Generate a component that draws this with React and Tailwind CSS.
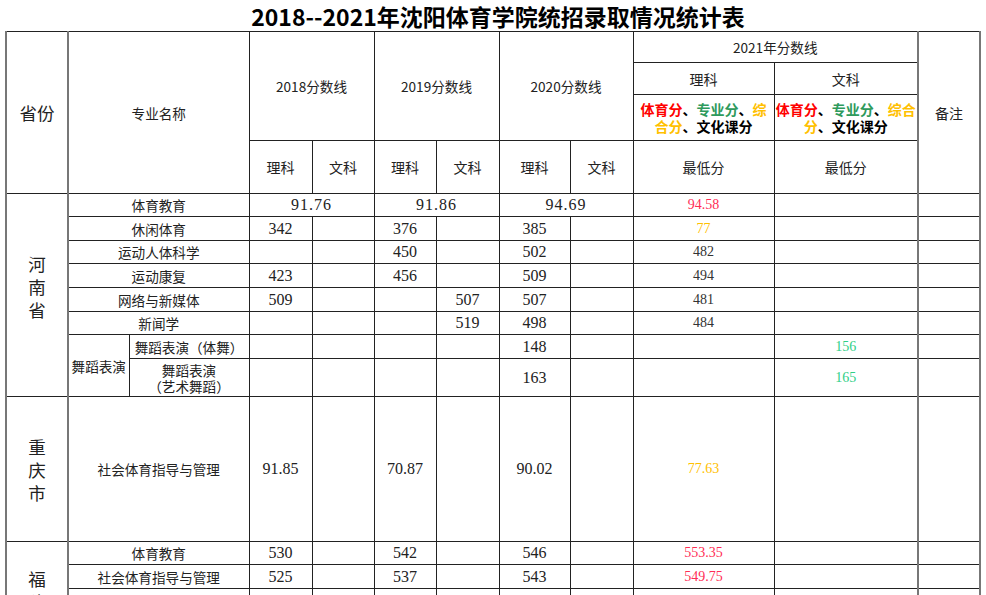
import React from "react";

const RED = "text-[#ff2d55]";
const GOLD = "text-[#ffc000]";
const GREEN = "text-[#2fcf86]";

const td = "border border-[#222] text-center align-middle p-0";
const sideL = "border-l-2 border-l-[#777] border-r-2 border-r-[#777]";
const sideR = "border-l-2 border-l-[#777] border-r-2 border-r-[#777]";
const num = "font-['Liberation_Serif',serif] text-[16px] text-[#222]";
const small = "font-['Liberation_Serif',serif] text-[14px]";

const Nums = ({ vals }) =>
    vals.map((v, i) => (
        <td key={i} className={`${td} ${num}`}>
            {v}
        </td>
    ));

const Low = ({ li, wen }) => (
    <>
        <td className={`${td} ${small} ${li ? li.c : ""}`}>{li ? li.v : ""}</td>
        <td className={`${td} ${small} ${wen ? wen.c : ""}`}>{wen ? wen.v : ""}</td>
        <td className={`${td} ${sideR}`}></td>
    </>
);

const Vertical = ({ chars, className = "" }) => (
    <div className={`flex flex-col items-center leading-[23px] text-[17.5px] ${className}`}>
        {chars.split("").map((c, i) => (
            <span key={i}>{c}</span>
        ))}
    </div>
);

const henan = [
    { name: "休闲体育", v: ["342", "", "376", "", "385", ""], li: { v: "77", c: GOLD }, h: "h-[24px]" },
    { name: "运动人体科学", v: ["", "", "450", "", "502", ""], li: { v: "482", c: "text-[#333]" }, h: "h-[23px]" },
    { name: "运动康复", v: ["423", "", "456", "", "509", ""], li: { v: "494", c: "text-[#333]" }, h: "h-[24px]" },
    { name: "网络与新媒体", v: ["509", "", "", "507", "507", ""], li: { v: "481", c: "text-[#333]" }, h: "h-[24px]" },
    { name: "新闻学", v: ["", "", "", "519", "498", ""], li: { v: "484", c: "text-[#333]" }, h: "h-[23px]" },
];

const cols = [62, 61, 120, 63, 62, 62, 63, 71, 63, 141, 144, 62];

export default function App() {
    return (
        <div className="w-[986px] h-[595px] overflow-hidden bg-white text-[#222] font-['Noto_Sans_CJK_SC',sans-serif]">
            <div className="h-[31px] flex items-center justify-center pl-[10px] pt-[2px] text-[23px] font-bold text-black leading-none">
                2018--2021年沈阳体育学院统招录取情况统计表
            </div>
            <table className="ml-[5px] w-[974px] table-fixed border-collapse text-[13.6px] leading-[18px]">
                <colgroup>
                    {cols.map((w, i) => (
                        <col key={i} style={{ width: w }} />
                    ))}
                </colgroup>
                <tbody>
                    <tr className="h-[31px]">
                        <td rowSpan={4} className={`${td} ${sideL} text-[17.5px]`}>省份</td>
                        <td rowSpan={4} colSpan={2} className={td}>专业名称</td>
                        <td rowSpan={3} colSpan={2} className={td}>2018分数线</td>
                        <td rowSpan={3} colSpan={2} className={td}>2019分数线</td>
                        <td rowSpan={3} colSpan={2} className={td}>2020分数线</td>
                        <td colSpan={2} className={td}>2021年分数线</td>
                        <td rowSpan={4} className={`${td} ${sideR} text-[14px]`}>备注</td>
                    </tr>
                    <tr className="h-[32px]">
                        <td className={`${td} text-[14px]`}>理科</td>
                        <td className={`${td} text-[14px]`}>文科</td>
                    </tr>
                    <tr className="h-[46px]">
                        <td className={`${td} font-bold text-[14px] leading-[17px] text-black`}>
                            <div className="whitespace-nowrap">
                                <span className="text-[#ff0000]">体育分</span>、<span className="text-[#2e9a5c]">专业分</span>、<span className={GOLD}>综</span>
                            </div>
                            <div className="whitespace-nowrap">
                                <span className={GOLD}>合分</span>、文化课分
                            </div>
                        </td>
                        <td className={`${td} font-bold text-[14px] leading-[17px] text-black`}>
                            <div className="whitespace-nowrap">
                                <span className="text-[#ff0000]">体育分</span>、<span className="text-[#2e9a5c]">专业分</span>、<span className={GOLD}>综合</span>
                            </div>
                            <div className="whitespace-nowrap">
                                <span className={GOLD}>分</span>、文化课分
                            </div>
                        </td>
                    </tr>
                    <tr className="h-[53px]">
                        <td className={`${td} text-[14px]`}>理科</td>
                        <td className={`${td} text-[14px]`}>文科</td>
                        <td className={`${td} text-[14px]`}>理科</td>
                        <td className={`${td} text-[14px]`}>文科</td>
                        <td className={`${td} text-[14px]`}>理科</td>
                        <td className={`${td} text-[14px]`}>文科</td>
                        <td className={`${td} text-[14px]`}>最低分</td>
                        <td className={`${td} text-[14px]`}>最低分</td>
                    </tr>

                    {/* 河南省 */}
                    <tr className="h-[23px]">
                        <td rowSpan={8} className={`${td} ${sideL}`}>
                            <Vertical chars="河南省" className="pb-[18px]" />
                        </td>
                        <td colSpan={2} className={td}>体育教育</td>
                        <td colSpan={2} className={`${td} ${num} tracking-[1px]`}>91.76</td>
                        <td colSpan={2} className={`${td} ${num} tracking-[1px]`}>91.86</td>
                        <td colSpan={2} className={`${td} ${num} tracking-[1px]`}>94.69</td>
                        <Low li={{ v: "94.58", c: RED }} />
                    </tr>
                    {henan.map((r) => (
                        <tr key={r.name} className={r.h}>
                            <td colSpan={2} className={td}>{r.name}</td>
                            <Nums vals={r.v} />
                            <Low li={r.li} />
                        </tr>
                    ))}
                    <tr className="h-[24px]">
                        <td rowSpan={2} className={td}>舞蹈表演</td>
                        <td className={`${td} whitespace-nowrap`}>舞蹈表演（体舞）</td>
                        <Nums vals={["", "", "", "", "148", ""]} />
                        <Low wen={{ v: "156", c: GREEN }} />
                    </tr>
                    <tr className="h-[38px]">
                        <td className={`${td} leading-[16px]`}>
                            <div>舞蹈表演</div>
                            <div className="whitespace-nowrap">（艺术舞蹈）</div>
                        </td>
                        <Nums vals={["", "", "", "", "163", ""]} />
                        <Low wen={{ v: "165", c: GREEN }} />
                    </tr>

                    {/* 重庆市 */}
                    <tr className="h-[145px]">
                        <td className={`${td} ${sideL}`}>
                            <Vertical chars="重庆市" />
                        </td>
                        <td colSpan={2} className={td}>社会体育指导与管理</td>
                        <Nums vals={["91.85", "", "70.87", "", "90.02", ""]} />
                        <Low li={{ v: "77.63", c: GOLD }} />
                    </tr>

                    {/* 福建省 */}
                    <tr className="h-[23px]">
                        <td rowSpan={5} className={`${td} ${sideL}`}>
                            <Vertical chars="福建省" />
                        </td>
                        <td colSpan={2} className={td}>体育教育</td>
                        <Nums vals={["530", "", "542", "", "546", ""]} />
                        <Low li={{ v: "553.35", c: RED }} />
                    </tr>
                    <tr className="h-[24px]">
                        <td colSpan={2} className={td}>社会体育指导与管理</td>
                        <Nums vals={["525", "", "537", "", "543", ""]} />
                        <Low li={{ v: "549.75", c: RED }} />
                    </tr>
                    {[0, 1, 2].map((i) => (
                        <tr key={i} className="h-[24px]">
                            <td colSpan={2} className={td}></td>
                            <Nums vals={["", "", "", "", "", ""]} />
                            <Low />
                        </tr>
                    ))}
                </tbody>
            </table>
        </div>
    );
}
